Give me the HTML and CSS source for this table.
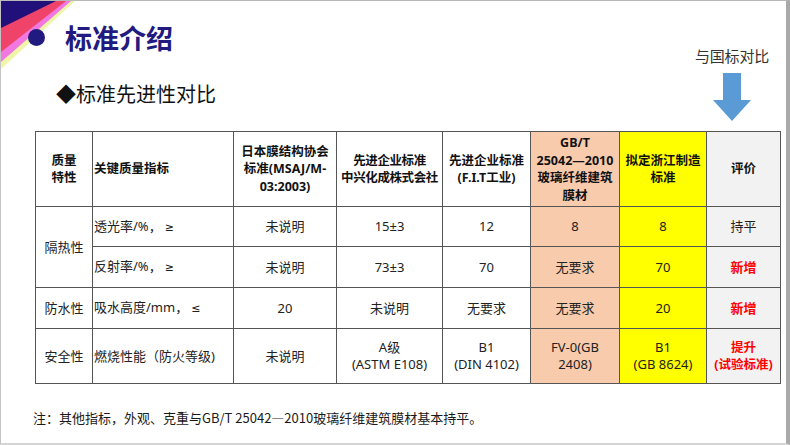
FILE: index.html
```html
<!DOCTYPE html>
<html lang="zh">
<head>
<meta charset="utf-8">
<link rel="stylesheet" href="styles.css">
</head>
<body>
<div class="slide">
  <svg class="corner" width="80" height="70" viewBox="0 0 80 70">
    <polygon points="0,0 74,0 0,68" fill="#f0f5a8"/>
    <polygon points="0,0 70,0 0,61" fill="#f078e0"/>
    <polygon points="0,0 65,0 0,51" fill="#f0436a"/>
    <polygon points="0,0 55,0 0,27" fill="#21107a"/>
  </svg>
  <div class="head">
    <div class="head-left">
      <div class="title-row">
        <span class="dot"></span>
        <h1 class="title">标准介绍</h1>
      </div>
      <div class="subtitle">◆标准先进性对比</div>
    </div>
    <div class="compare">
      <div class="compare-label">与国标对比</div>
      <svg class="arrow" width="40" height="48" viewBox="0 0 40 48">
        <polygon points="11,0 29,0 29,27 39,27 20,48 1,27 11,27" fill="#5b9bd5"/>
      </svg>
    </div>
  </div>
  <table class="cmp">
    <colgroup>
      <col style="width:57px"><col style="width:141px"><col style="width:103px"><col style="width:106px">
      <col style="width:88px"><col style="width:89px"><col style="width:87px"><col style="width:74px">
    </colgroup>
    <thead>
      <tr class="r-head">
        <th>质量<br>特性</th>
        <th class="left">关键质量指标</th>
        <th>日本膜结构协会<br>标准(MSAJ/M-<br>03:2003)</th>
        <th class="narrow">先进企业标准<br>中兴化成株式会社</th>
        <th>先进企业标准<br>(F.I.T工业)</th>
        <th class="peach">GB/T<br>25042—2010<br>玻璃纤维建筑<br>膜材</th>
        <th class="yellow">拟定浙江制造<br>标准</th>
        <th class="gray">评价</th>
      </tr>
    </thead>
    <tbody>
      <tr class="r1">
        <td rowspan="2">隔热性</td>
        <td class="left">透光率/%，<span class="sym">≥</span></td>
        <td>未说明</td>
        <td>15±3</td>
        <td>12</td>
        <td class="peach">8</td>
        <td class="yellow">8</td>
        <td class="gray">持平</td>
      </tr>
      <tr class="r2">
        <td class="left">反射率/%，<span class="sym">≥</span></td>
        <td>未说明</td>
        <td>73±3</td>
        <td>70</td>
        <td class="peach">无要求</td>
        <td class="yellow">70</td>
        <td class="gray red">新增</td>
      </tr>
      <tr class="r3">
        <td>防水性</td>
        <td class="left">吸水高度/mm，<span class="sym">≤</span></td>
        <td>20</td>
        <td>未说明</td>
        <td>无要求</td>
        <td class="peach">无要求</td>
        <td class="yellow">20</td>
        <td class="gray red">新增</td>
      </tr>
      <tr class="r4">
        <td>安全性</td>
        <td class="left">燃烧性能（防火等级)</td>
        <td>未说明</td>
        <td>A级<br>(ASTM E108)</td>
        <td>B1<br>(DIN 4102)</td>
        <td class="peach">FV-0(GB<br>2408)</td>
        <td class="yellow">B1<br>(GB 8624)</td>
        <td class="gray red squeeze">提升<br>(试验标准)</td>
      </tr>
    </tbody>
  </table>
  <p class="note">注：其他指标，外观、克重与GB/T 25042—2010玻璃纤维建筑膜材基本持平。</p>
</div>
</body>
</html>
```
FILE: styles.css
```css
html, body {
  margin: 0;
  padding: 0;
  background: #ffffff;
}
body {
  font-family: "Noto Sans CJK SC", "Noto Sans", sans-serif;
  color: #1a1a1a;
}
.slide {
  position: relative;
  width: 790px;
  height: 445px;
  box-sizing: border-box;
  border-top: 1px solid #b8b8b8;
  border-left: 1px solid #c4c4c4;
  border-right: 4px solid #a9a9a9;
  border-bottom: 2px solid #d4d4d4;
  overflow: hidden;
}
.corner {
  position: absolute;
  left: 0;
  top: 0;
}
.head {
  height: 130px;
  display: flex;
  justify-content: space-between;
  align-items: flex-start;
}
.head-left {
  display: flex;
  flex-direction: column;
}
.title-row {
  display: flex;
  align-items: center;
  padding-top: 23px;
}
.dot {
  position: relative;
  width: 17px;
  height: 17px;
  border-radius: 50%;
  background: #211a80;
  margin-left: 27px;
  margin-right: 20px;
}
.title {
  margin: 0;
  font-size: 27px;
  line-height: 27px;
  font-weight: 700;
  color: #211a80;
  position: relative;
}
.subtitle {
  margin-top: 33px;
  margin-left: 55px;
  font-size: 20px;
  line-height: 20px;
  color: #111;
}
.compare {
  display: flex;
  flex-direction: column;
  align-items: center;
  width: 80px;
  margin-right: 14px;
  padding-top: 47px;
}
.compare-label {
  font-size: 15px;
  line-height: 16px;
  color: #333;
  letter-spacing: -0.2px;
}
.arrow {
  display: block;
  margin-top: 9px;
}
.cmp {
  margin-left: 34px;
  border-collapse: collapse;
  table-layout: fixed;
  width: 745px;
  border: 1.5px solid #555;
  font-family: "Noto Sans", "Noto Sans CJK SC", sans-serif;
  font-size: 13px;
}
.cmp th, .cmp td {
  border: 1px solid #555;
  padding: 0 1px;
  text-align: center;
  vertical-align: middle;
  line-height: 17px;
}
.cmp th {
  font-weight: 700;
  color: #111;
  font-size: 12.5px;
  line-height: 17.5px;
}
.cmp th.narrow {
  letter-spacing: -0.4px;
}
.cmp td {
  font-weight: 400;
  color: #222;
}
.cmp .left {
  text-align: left;
  padding-left: 1px;
}
.sym {
  font-family: "DejaVu Sans", sans-serif;
  font-size: 11px;
  margin-left: 3px;
}
.r-head { height: 75px; }
.r1 { height: 40px; }
.r2 { height: 41px; }
.r3 { height: 41px; }
.r4 { height: 55px; }
.peach { background: #f8cbad; }
.yellow { background: #ffff00; }
.gray { background: #f2f2f2; }
.cmp .red {
  color: #ff0000;
  font-weight: 700;
}
.cmp .squeeze {
  white-space: nowrap;
  font-size: 12.5px;
}
.note {
  margin: 26px 0 0 32px;
  font-size: 13px;
  line-height: 16px;
  color: #1a1a1a;
}
```
